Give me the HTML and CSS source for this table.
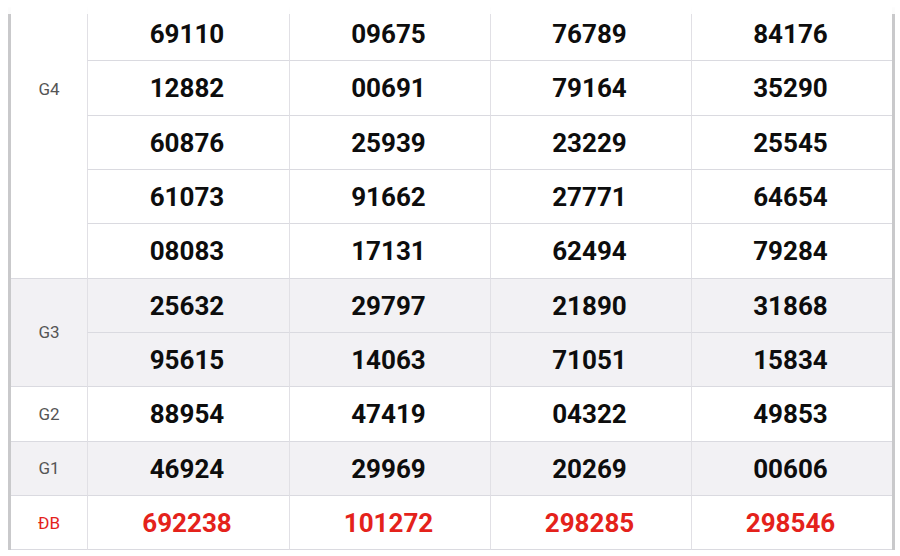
FILE: index.html
```html
<!DOCTYPE html>
<html lang="vi">
<head>
<meta charset="utf-8">
<title>Kết quả xổ số</title>
<link rel="stylesheet" href="styles.css">
</head>
<body>
<div class="page">
  <div class="board">
    <div class="label top" style="grid-row: span 5">G4</div>
    <div class="num">69110</div><div class="num">09675</div><div class="num">76789</div><div class="num">84176</div>
    <div class="num">12882</div><div class="num">00691</div><div class="num">79164</div><div class="num">35290</div>
    <div class="num">60876</div><div class="num">25939</div><div class="num">23229</div><div class="num">25545</div>
    <div class="num">61073</div><div class="num">91662</div><div class="num">27771</div><div class="num">64654</div>
    <div class="num">08083</div><div class="num">17131</div><div class="num">62494</div><div class="num">79284</div>

    <div class="label alt" style="grid-row: span 2">G3</div>
    <div class="num alt">25632</div><div class="num alt">29797</div><div class="num alt">21890</div><div class="num alt">31868</div>
    <div class="num alt">95615</div><div class="num alt">14063</div><div class="num alt">71051</div><div class="num alt">15834</div>

    <div class="label">G2</div>
    <div class="num">88954</div><div class="num">47419</div><div class="num">04322</div><div class="num">49853</div>

    <div class="label alt">G1</div>
    <div class="num alt">46924</div><div class="num alt">29969</div><div class="num alt">20269</div><div class="num alt">00606</div>

    <div class="label special">ĐB</div>
    <div class="num special">692238</div><div class="num special">101272</div><div class="num special">298285</div><div class="num special">298546</div>
  </div>
  <div class="fade"></div>
</div>
</body>
</html>
```

FILE: styles.css
```css
* { box-sizing: border-box; }
html, body {
  margin: 0;
  padding: 0;
  background: #ffffff;
}
body {
  font-family: Roboto, "Liberation Sans", Arial, sans-serif;
  width: 900px;
  height: 556px;
  overflow: hidden;
}
.page {
  position: relative;
  padding: 7px 5px 0 8px;
}
.board {
  display: grid;
  grid-template-columns: 76px 202px 201px 201px 201px;
  grid-template-rows: repeat(10, 54.33px);
  border-left: 3px solid #c9c9cb;
  border-right: 3px solid #c9c9cb;
  width: 887px;
}
.label {
  display: flex;
  align-items: center;
  justify-content: center;
  font-size: 17px;
  line-height: 20px;
  color: #555555;
  border-bottom: 1px solid #dadae0;
  background: #ffffff;
}
.label.top {
  align-items: flex-start;
  padding-top: 72px;
}
.num {
  display: flex;
  align-items: center;
  justify-content: center;
  font-size: 26px;
  font-weight: 700;
  color: #0d0d0d;
  border-left: 1px solid #e1e0e5;
  border-bottom: 1px solid #dadae0;
  background: #ffffff;
  padding: 1px 3px 0 0;
}
.alt { background: #f2f1f4; }
.special { color: #e4221b; }
.fade {
  position: absolute;
  left: 0;
  top: 0;
  width: 100%;
  height: 14px;
  background: linear-gradient(rgba(255,255,255,1), rgba(255,255,255,0.92));
}
```
